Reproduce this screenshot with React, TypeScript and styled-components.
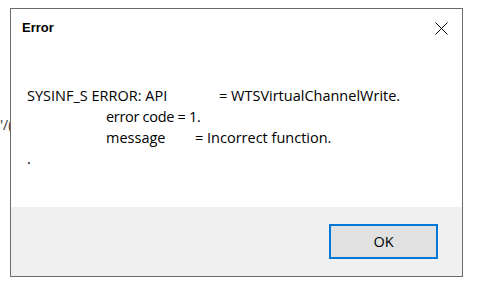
import styled, { createGlobalStyle } from 'styled-components'

const GlobalStyle = createGlobalStyle`
  html, body {
    margin: 0;
    padding: 0;
    background: #ffffff;
  }
  body {
    width: 480px;
    height: 290px;
    overflow: hidden;
  }
`

const Stage = styled.div`
  position: relative;
  width: 480px;
  height: 290px;
  padding: 8px 0 0 10px;
  box-sizing: border-box;
`

// bit of text from the window behind, peeking out on the left
const BehindText = styled.div`
  position: absolute;
  left: 0;
  top: 115px;
  font-family: 'Open Sans', 'Noto Sans', sans-serif;
  font-size: 14px;
  color: #333;
  z-index: 0;
`

const Dialog = styled.div`
  position: relative;
  z-index: 1;
  width: 453px;
  height: 269px;
  box-sizing: border-box;
  border: 1px solid #6a6a6a;
  background: #ffffff;
  display: flex;
  flex-direction: column;
`

const TitleBar = styled.div`
  display: flex;
  align-items: center;
  justify-content: space-between;
  height: 38px;
  padding: 0 14px 0 11px;
  box-sizing: border-box;
`

const Title = styled.span`
  font-family: 'Liberation Sans', Arial, sans-serif;
  font-size: 13px;
  font-weight: bold;
  color: #000;
  margin-top: -1px;
`

const CloseButton = styled.div`
  width: 14px;
  height: 14px;
  display: flex;
  align-items: center;
  justify-content: center;
  margin-top: 1px;
`

const Body = styled.div`
  flex: 1;
  padding: 38px 0 0 16px;
  font-family: 'Open Sans', 'Noto Sans', sans-serif;
  font-size: 14.5px;
  color: #000;
`

const Line = styled.div`
  display: flex;
  height: 21px;
  line-height: 21px;
  white-space: pre;
`

const Cell = styled.span<{ $w?: number; $tight?: boolean }>`
  display: inline-block;
  width: ${({ $w }) => ($w ? `${$w}px` : 'auto')};
  letter-spacing: ${({ $tight }) => ($tight ? '-0.3px' : 'normal')};
  flex-shrink: 0;
`

const Footer = styled.div`
  height: 69px;
  background: #f0f0f0;
  display: flex;
  justify-content: flex-end;
  align-items: flex-start;
  padding: 17px 24px 0 0;
  box-sizing: border-box;
`

const OkButton = styled.button`
  width: 109px;
  height: 35px;
  box-sizing: border-box;
  border: 2px solid #0078d7;
  background: #e1e1e1;
  font-family: 'Open Sans', 'Noto Sans', sans-serif;
  font-size: 14.5px;
  color: #000;
  padding: 0;
  cursor: default;
  outline: none;
`

export default function App() {
  return (
    <>
      <GlobalStyle />
      <Stage>
        <BehindText>'/(</BehindText>
        <Dialog>
          <TitleBar>
            <Title>Error</Title>
            <CloseButton>
              <svg width="13" height="13" viewBox="0 0 13 13">
                <path d="M0.5 0.5 L12.5 12.5 M12.5 0.5 L0.5 12.5" stroke="#000" strokeWidth="1" />
              </svg>
            </CloseButton>
          </TitleBar>
          <Body>
            <Line>
              <Cell $w={192}>SYSINF_S ERROR: API</Cell>
              <Cell>= WTSVirtualChannelWrite.</Cell>
            </Line>
            <Line>
              <Cell $w={79} />
              <Cell $tight>error code = 1.</Cell>
            </Line>
            <Line>
              <Cell $w={79} />
              <Cell $w={89}>message</Cell>
              <Cell>= Incorrect function.</Cell>
            </Line>
            <Line>
              <Cell>.</Cell>
            </Line>
          </Body>
          <Footer>
            <OkButton>OK</OkButton>
          </Footer>
        </Dialog>
      </Stage>
    </>
  )
}
